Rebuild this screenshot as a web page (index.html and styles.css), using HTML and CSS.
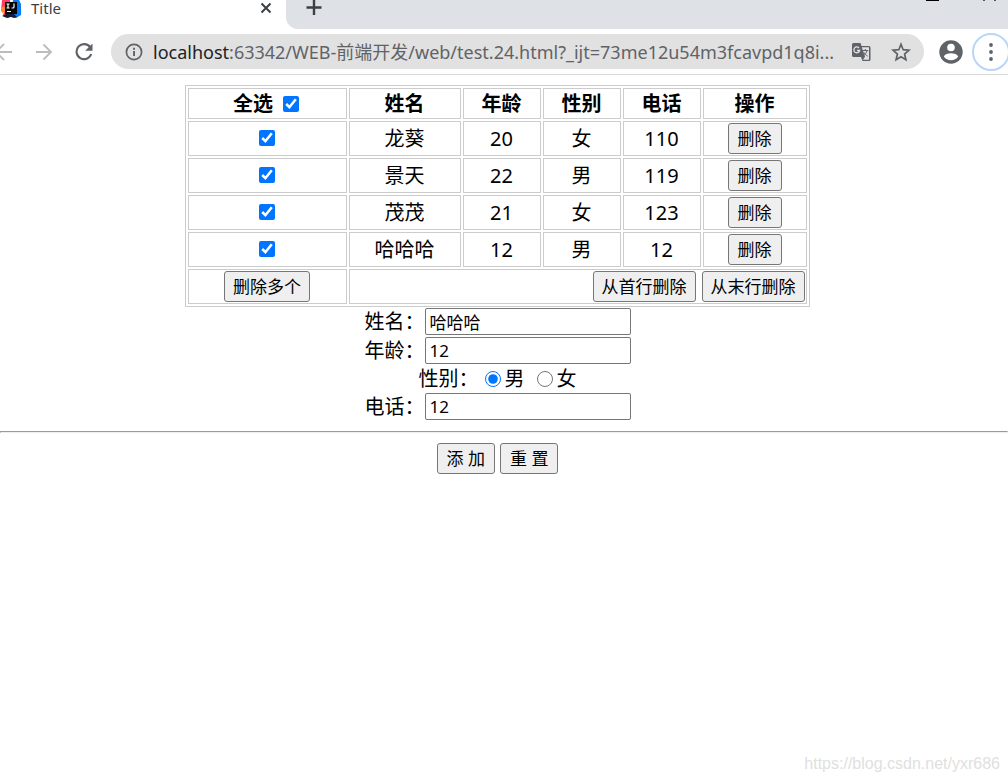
FILE: index.html
```html
<!DOCTYPE html>
<html lang="zh-CN">
<head>
<meta charset="utf-8">
<title>Title</title>
<link rel="stylesheet" href="styles.css">
</head>
<body>
<header class="browser">
  <div class="tab-strip">
    <div class="tab">
      <svg class="tab-icon" width="22" height="19" viewBox="0 0 22 19" aria-hidden="true">
        <path d="M2 0h8v16l-2 2-5-3 1-3-3-1z" fill="#fc3f67"/>
        <path d="M1 8 4 6l2 5-4 2z" fill="#ff8b2b"/>
        <path d="M13 0h6l2 4v11l-5 3-5-2z" fill="#087cfa"/>
        <path d="M5 2h12v12H5z" fill="#050505"/>
        <path d="M2 16l4-2h8l3 3-3 1-3-1-4 1z" fill="#151a38"/>
        <path d="M6.500 4h3M8 4v4M6.500 8h3M14 3.500v3.500q0 1-1 1h-1.500M7 11.500h4" fill="none" stroke="#fff" stroke-width="1.200"/>
      </svg>
      <span class="tab-title">Title</span>
      <button class="icon-button tab-close" aria-label="关闭标签页">
        <svg width="12" height="12" viewBox="0 0 12 12"><path d="M1.500 1.500l9 9M10.500 1.500l-9 9" fill="none" stroke="#3c4043" stroke-width="2"/></svg>
      </button>
    </div>
    <div class="strip-rest">
      <button class="icon-button" aria-label="新标签页">
        <svg width="16" height="16" viewBox="0 0 16 16"><path d="M8 0v15M0.500 7.500h15" fill="none" stroke="#3c4043" stroke-width="2.400"/></svg>
      </button>
      <svg class="window-controls" width="76" height="2" viewBox="0 0 76 2" aria-hidden="true"><path d="M0 0h13v1H0z" fill="#000"/><path d="M57 0h2v1h-2zM68 0h2v1h-2z" fill="#555"/></svg>
    </div>
  </div>
  <nav class="toolbar">
    <button class="icon-button back" aria-label="后退">
      <svg width="12" height="18" viewBox="0 0 12 18"><path d="M0 9h12M4 1-4 9l8 8" fill="none" stroke="#babcbe" stroke-width="1.800"/></svg>
    </button>
    <button class="icon-button forward" aria-label="前进">
      <svg width="18" height="18" viewBox="0 0 18 18"><path d="M1 9h15M8.500 1.500 16 9l-7.500 7.500" fill="none" stroke="#babcbe" stroke-width="1.800"/></svg>
    </button>
    <button class="icon-button reload" aria-label="重新加载">
      <svg width="18" height="18" viewBox="0 0 18 18"><path d="M15.200 4.300A7.500 7.500 0 1 0 16.200 11" fill="none" stroke="#5f6368" stroke-width="2.100"/><path d="M17.500.5v7.300h-7.300z" fill="#5f6368"/></svg>
    </button>
    <div class="address">
      <svg width="18" height="18" viewBox="0 0 18 18" aria-hidden="true"><circle cx="9" cy="9" r="7.600" fill="none" stroke="#5f6368" stroke-width="1.700"/><path d="M8.100 8h1.900v5H8.100zM8.100 4.800h1.900v1.900H8.100z" fill="#5f6368"/></svg>
      <span class="url" role="textbox" aria-label="地址栏" tabindex="0"><span class="host">localhost</span>:63342/WEB-前端开发/web/test.24.html?_ijt=73me12u54m3fcavpd1q8i...</span>
      <button class="icon-button" aria-label="翻译此页">
        <svg width="20" height="20" viewBox="0 0 20 20"><path d="M2.500 1h7l1 3H18q1.500 0 1.500 1.500v12q0 1.500-1.500 1.500h-6.500l-1.500-4H2.500Q1 15 1 13.500v-11Q1 1 2.500 1z" fill="#5f6368"/><path d="M10.800 5.200H18v12.600h-6l2-3z" fill="#e1e1e1"/><path d="M8 6A2.900 2.900 0 1 0 8.600 8.500H6" fill="none" stroke="#e1e1e1" stroke-width="1.300"/><path d="M11.800 8.500h5.500M14.300 7v1.500M16 8.500c-.5 2.500-1.700 4-3.500 5.200M12.700 10c.8 1.800 2.200 3.200 4 4.200" fill="none" stroke="#5f6368" stroke-width="1"/></svg>
      </button>
      <button class="icon-button star" aria-label="加入书签">
        <svg width="20" height="20" viewBox="0 0 20 20"><path d="M10 2.300l2.200 5.400 5.800.5-4.400 3.800 1.300 5.700L10 14.700l-4.900 3 1.300-5.700L2 8.200l5.800-.5z" fill="none" stroke="#5f6368" stroke-width="1.700"/></svg>
      </button>
    </div>
    <button class="icon-button profile" aria-label="个人资料">
      <svg width="24" height="24" viewBox="0 0 24 24"><circle cx="12" cy="12" r="11.700" fill="#5f6368"/><circle cx="12" cy="7.500" r="3.800" fill="#fff"/><path d="M4.800 16.500c2-4.400 12.400-4.400 14.400 0-3.200 5-11.200 5-14.400 0z" fill="#fff"/></svg>
    </button>
    <button class="icon-button menu" aria-label="菜单">
      <svg width="4" height="18" viewBox="0 0 4 18"><g fill="#5f6368"><circle cx="2" cy="2" r="1.900"/><circle cx="2" cy="9" r="1.900"/><circle cx="2" cy="16" r="1.900"/></g></svg>
    </button>
  </nav>
</header>

<main class="page">
  <div class="table-wrap">
    <table class="people">
      <colgroup><col class="col-check"><col class="col-name"><col class="col-short"><col class="col-short"><col class="col-short"><col class="col-action"></colgroup>
      <thead>
        <tr><th><label class="check-all">全选 <input type="checkbox" checked></label></th><th>姓名</th><th>年龄</th><th>性别</th><th>电话</th><th>操作</th></tr>
      </thead>
      <tbody>
        <tr><td><input type="checkbox" aria-label="选择龙葵" checked></td><td>龙葵</td><td>20</td><td>女</td><td>110</td><td><button class="btn short-btn">删除</button></td></tr>
        <tr><td><input type="checkbox" aria-label="选择景天" checked></td><td>景天</td><td>22</td><td>男</td><td>119</td><td><button class="btn short-btn">删除</button></td></tr>
        <tr><td><input type="checkbox" aria-label="选择茂茂" checked></td><td>茂茂</td><td>21</td><td>女</td><td>123</td><td><button class="btn short-btn">删除</button></td></tr>
        <tr><td><input type="checkbox" aria-label="选择哈哈哈" checked></td><td>哈哈哈</td><td>12</td><td>男</td><td>12</td><td><button class="btn short-btn">删除</button></td></tr>
      </tbody>
      <tfoot>
        <tr><td><button class="btn">删除多个</button></td><td colspan="5"><div class="foot-actions"><button class="btn">从首行删除</button><button class="btn">从末行删除</button></div></td></tr>
      </tfoot>
    </table>
  </div>

  <form class="entry">
    <div class="field"><label for="name">姓名：</label><input class="text" id="name" type="text" value="哈哈哈"></div>
    <div class="field"><label for="age">年龄：</label><input class="text" id="age" type="text" value="12"></div>
    <div class="field gender" role="radiogroup" aria-labelledby="gender-label">
      <span id="gender-label">性别：</span>
      <label class="choice"><input type="radio" name="gender" checked>男</label>
      <label class="choice"><input type="radio" name="gender">女</label>
    </div>
    <div class="field"><label for="phone">电话：</label><input class="text" id="phone" type="text" value="12"></div>
    <hr class="rule">
    <div class="actions"><button class="btn short-btn" type="button">添 加</button><button class="btn short-btn" type="reset">重 置</button></div>
  </form>
</main>
<footer class="watermark">https://blog.csdn.net/yxr686</footer>
</body>
</html>
```
FILE: styles.css
```css
* {
  box-sizing: border-box;
}

body {
  margin: 0;
  min-height: 100vh;
  display: flex;
  flex-direction: column;
  background: #fff;
  color: #000;
  font-family: "Noto Sans", "Noto Sans CJK SC", sans-serif;
  font-size: 20px;
  line-height: 26px;
}

.icon-button {
  display: flex;
  align-items: center;
  justify-content: center;
  flex: none;
  padding: 0;
  border: 0;
  background: none;
}

/* Browser chrome */
.browser {
  border-bottom: 1px solid #dadada;
}

.tab-strip {
  display: flex;
  height: 29px;
  background: #fff;
}

.tab {
  display: flex;
  flex: none;
  align-items: flex-start;
  width: 286px;
  padding-right: 14px;
}

.tab-title {
  flex: 1;
  padding-left: 9px;
  color: #3c4043;
  font-size: 15px;
  line-height: 16px;
}

.tab-close {
  height: 16px;
}

.strip-rest {
  display: flex;
  flex: 1;
  align-items: flex-start;
  justify-content: space-between;
  padding: 0 6px 0 20px;
  border-bottom-left-radius: 12px;
  background: #dee1e6;
}

.window-controls {
  flex: none;
}

.toolbar {
  display: flex;
  align-items: center;
  height: 45px;
}

.forward {
  margin-left: 23px;
}

.reload {
  margin-left: 22px;
}

.address {
  display: flex;
  flex: 1;
  align-items: center;
  min-width: 0;
  height: 35px;
  margin-left: 18px;
  padding: 0 13px 0 14px;
  border-radius: 18px;
  background: #e1e1e1;
}

.url {
  flex: 1;
  min-width: 0;
  overflow: hidden;
  margin-left: 10px;
  color: #5f6368;
  font-size: 18px;
  line-height: 24px;
  white-space: nowrap;
}

.host {
  color: #202124;
}

.star {
  margin-left: 20px;
}

.profile {
  margin-left: 15px;
}

.menu {
  width: 38px;
  height: 38px;
  margin: 0 -2px 0 9px;
  border: 2px solid #b9d5f8;
  border-radius: 50%;
}

/* People table */
.page {
  padding-top: 10px;
}

.table-wrap {
  padding-right: 14px;
}

.people {
  width: 625px;
  margin: 0 auto;
  border: 1px solid #ccc;
  border-spacing: 2px;
  table-layout: fixed;
}

.col-check {
  width: 159px;
}

.col-name {
  width: 112px;
}

.col-short {
  width: 78px;
}

.col-action {
  width: 104px;
}

th,
td {
  padding: 1px;
  border: 1px solid #ccc;
  text-align: center;
}

th {
  height: 31px;
}

td {
  height: 35px;
}

input[type="checkbox"],
input[type="radio"] {
  width: 16px;
  height: 16px;
  margin: 0;
}

td input[type="checkbox"] {
  display: block;
  margin: 0 auto 2px;
}

.check-all {
  display: flex;
  align-items: center;
  justify-content: center;
  gap: 10px;
  padding-right: 2px;
}

.btn {
  height: 31px;
  padding: 0 8px;
  border: 1px solid #767676;
  border-radius: 3px;
  background: #efefef;
  color: #000;
  font-family: inherit;
  font-size: 17px;
  line-height: 24px;
  vertical-align: top;
}

.short-btn {
  padding: 0 9px;
}

.foot-actions {
  display: flex;
  justify-content: flex-end;
  gap: 6px;
}

/* Entry form */
.field {
  display: flex;
  align-items: center;
  justify-content: center;
  height: 29px;
  padding-right: 13px;
}

.text {
  width: 206px;
  height: 27px;
  padding: 1px 4px;
  border: 1px solid #767676;
  border-radius: 2px;
  background: #fff;
  color: #000;
  font-family: inherit;
  font-size: 17px;
}

.gender {
  gap: 12px;
  height: 27px;
}

.choice {
  display: flex;
  align-items: center;
  gap: 4px;
}

#gender-label {
  margin-right: -6px;
}

.rule {
  margin: 10px 0;
}

.actions {
  display: flex;
  justify-content: center;
  gap: 5px;
  padding-right: 13px;
}

.watermark {
  margin-top: auto;
  padding: 0 8px 5px;
  color: #e0e0e0;
  font-family: "Liberation Sans", Arial, sans-serif;
  font-size: 16px;
  text-align: right;
}
```
